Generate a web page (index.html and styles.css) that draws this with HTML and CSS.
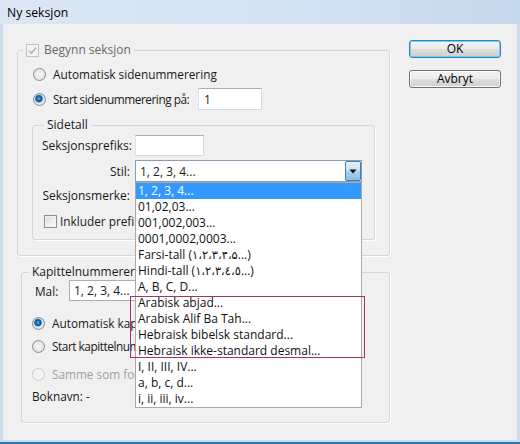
FILE: index.html
```html
<!DOCTYPE html>
<html lang="no">
<head>
<meta charset="utf-8">
<title>Ny seksjon</title>
<link rel="stylesheet" href="styles.css">
</head>
<body>
<div class="window">
  <div class="titlebar">Ny seksjon</div>
  <div class="frame">
    <div class="client">
      <div class="groups">
        <fieldset class="group group-main">
          <legend class="legend legend-main">
            <span class="check check-disabled"><svg viewBox="0 0 11 11" width="11" height="11"><path d="M2 5.6 L4.4 8.2 L9 2.6" fill="none" stroke="#a9a9a9" stroke-width="1.3"/></svg></span>
            <span class="legend-muted">Begynn seksjon</span>
          </legend>
          <div class="group-body body-main">
            <div class="row row-radio">
              <span class="radio"></span>
              <span>Automatisk sidenummerering</span>
            </div>
            <div class="row row-radio row-start">
              <span class="radio on"></span>
              <span class="start-label narrow">Start sidenummerering på:</span>
              <span class="textbox tb-start">1</span>
            </div>
            <fieldset class="group group-sidetall">
              <legend class="legend legend-sidetall">Sidetall</legend>
              <div class="group-body body-sidetall">
                <div class="field field-prefix">
                  <span class="field-label">Seksjonsprefiks:</span>
                  <span class="textbox tb-prefix"></span>
                </div>
                <div class="field field-stil">
                  <span class="field-label">Stil:</span>
                  <div class="combo combo-stil">
                    <span class="combo-value">1, 2, 3, 4...</span>
                    <span class="combo-btn"><svg viewBox="0 0 14 18" width="14" height="18"><path d="M3.5 7.5 H10.5 L7 11.5 Z" fill="#111"/></svg></span>
                    <ul class="dropdown">
                      <li class="item selected">1, 2, 3, 4...</li>
                      <li class="item">01,02,03...</li>
                      <li class="item">001,002,003...</li>
                      <li class="item">0001,0002,0003...</li>
                      <li class="item">Farsi-tall (<span class="num">۱،۲،۳،۴،۵</span>...)</li>
                      <li class="item">Hindi-tall (<span class="num">١،٢،٣،٤،٥</span>...)</li>
                      <li class="item">A, B, C, D...</li>
                      <li class="item">Arabisk abjad...</li>
                      <li class="item">Arabisk Alif Ba Tah...</li>
                      <li class="item">Hebraisk bibelsk standard...</li>
                      <li class="item">Hebraisk ikke-standard desmal...</li>
                      <li class="item">I, II, III, IV...</li>
                      <li class="item">a, b, c, d...</li>
                      <li class="item">i, ii, iii, iv...</li>
                      <li class="annot" aria-hidden="true"></li>
                    </ul>
                  </div>
                </div>
                <div class="field field-merke">
                  <span class="field-label">Seksjonsmerke:</span>
                  <span class="textbox tb-merke"></span>
                </div>
                <div class="row row-check">
                  <span class="check"></span>
                  <span>Inkluder prefiks ved nummerering</span>
                </div>
              </div>
            </fieldset>
          </div>
        </fieldset>

        <fieldset class="group group-kap">
          <legend class="legend legend-kap">Kapittelnummerering</legend>
          <div class="group-body body-kap">
            <div class="row row-mal">
              <span class="mal-label">Mal:</span>
              <span class="combo combo-mal"><span class="combo-value">1, 2, 3, 4...</span></span>
            </div>
            <div class="row row-radio row-auto">
              <span class="radio on"></span>
              <span>Automatisk kapittelnummerering</span>
            </div>
            <div class="row row-radio row-kstart">
              <span class="radio"></span>
              <span class="start-label narrow">Start kapittelnummerering på:</span>
              <span class="textbox tb-start"></span>
            </div>
            <div class="row row-radio row-same disabled">
              <span class="radio radio-disabled"></span>
              <span>Samme som forrige dokument i boken</span>
            </div>
            <div class="row row-book">Boknavn: -</div>
          </div>
        </fieldset>
      </div>

      <div class="buttons">
        <button class="btn btn-default" type="button">OK</button>
        <button class="btn" type="button">Avbryt</button>
      </div>
    </div>
  </div>
</div>
</body>
</html>
```

FILE: styles.css
```css
* {
  box-sizing: border-box;
}

html,
body {
  margin: 0;
  padding: 0;
}

body {
  width: 520px;
  height: 444px;
  overflow: hidden;
  font-family: "Open Sans", "DejaVu Sans", sans-serif;
  font-size: 11.8px;
  color: #1a1a1a;
  background: #cddcee;
}

.window {
  width: 520px;
  height: 444px;
  display: flex;
  flex-direction: column;
}

.titlebar {
  flex: none;
  height: 24px;
  padding: 1px 0 0 7px;
  line-height: 23px;
  font-size: 12.2px;
  color: #000;
  background: linear-gradient(90deg, #dbe7f4 0%, #d3e2f2 60%, #c6d8ec 100%);
}

.frame {
  flex: 1;
  display: flex;
  padding: 0 3px 2px;
  background: #cddcee;
  border-bottom: 2px solid #2b79a9;
}

.client {
  flex: 1;
  display: flex;
  justify-content: space-between;
  align-items: flex-start;
  padding: 16px 16px 0 14px;
  background: #f0f0f0;
}

.groups {
  width: 373px;
  margin-top: 2px;
}

/* group boxes */
.group {
  margin: 0;
  padding: 0;
  min-inline-size: 0;
  border: 1px solid #d3d6d9;
  border-radius: 3px;
  box-shadow: 1px 1px 0 #ffffff;
}

.legend {
  display: flex;
  align-items: center;
  height: 16px;
  line-height: 16px;
  padding: 0 3px;
  font-size: 12px;
}

.legend-main {
  margin-left: 5px;
  padding: 0 4px 0 3px;
  gap: 5px;
}

.legend-muted {
  color: #6a6a6a;
}

.legend-sidetall {
  margin-left: 11px;
}

.legend-kap {
  margin-left: 7px;
}

.group-main {
  width: 373px;
}

.body-main {
  padding: 5px 14px 15px 14px;
}

.group-sidetall {
  width: 343px;
  margin-top: 7px;
}

.body-sidetall {
  padding: 2px 0 7px 9px;
}

.group-kap {
  width: 369px;
  margin: 8px 0 0 4px;
}

.body-kap {
  padding: 0 10px 15px 10px;
}

/* rows */
.row {
  display: flex;
  align-items: center;
  height: 22px;
  white-space: nowrap;
}

.body-main .row-radio {
  padding-left: 1px;
}

.row-start {
  margin-top: 3px;
}

.start-label {
  width: 145px;
  flex: none;
}

.narrow {
  letter-spacing: -0.45px;
}

.row-check {
  margin-top: 4px;
  padding-left: 2px;
}

.row-mal {
  height: 21px;
}

.row-auto {
  margin-top: 11px;
}

.row-kstart {
  margin-top: 1px;
}

.row-same {
  margin-top: 6px;
}

.disabled {
  color: #a0a0a0;
}

/* form rows inside Sidetall */
.field {
  display: flex;
  align-items: center;
  height: 22px;
  white-space: nowrap;
}

.field-prefix {
  height: 21px;
}

.field-stil {
  margin-top: 4px;
}

.field-merke {
  margin-top: 2px;
}

.field-label {
  flex: none;
  width: 88px;
  margin-right: 5px;
  text-align: right;
  font-size: 12px;
}

/* controls */
.radio {
  flex: none;
  width: 13px;
  height: 13px;
  margin-right: 7px;
  border-radius: 50%;
  border: 1px solid #8a8c8e;
  background: radial-gradient(circle at 50% 50%, #f7f7f7 0, #e6e6e6 60%, #cdcdcd 100%);
}

.radio.on {
  background:
    radial-gradient(circle at 45% 42%, #6cb8e6 0, #2b75b0 1.6px, #174c7d 3px, #3f8cc6 3.5px, #bfe0f4 4.2px, rgba(255, 255, 255, 0) 4.8px),
    radial-gradient(circle at 50% 50%, #f7f7f7 0, #e6e6e6 60%, #cdcdcd 100%);
}

.radio-disabled {
  border-color: #c8c8c8;
  background: #f3f3f3;
}

.check {
  flex: none;
  display: flex;
  align-items: center;
  justify-content: center;
  width: 13px;
  height: 13px;
  margin-right: 3px;
  border: 1px solid #8e8f8f;
  box-shadow: inset 0 0 0 1px #f3f3f3;
  background: linear-gradient(135deg, #d8d8d8 0%, #f4f4f4 70%, #fbfbfb 100%);
}

.check-disabled {
  margin-right: 0;
  border-color: #c3c3c3;
  background: #f4f4f4;
}

.textbox {
  flex: none;
  display: flex;
  align-items: center;
  height: 22px;
  padding-left: 5px;
  background: #fff;
  border: 1px solid #d8dbe0;
  border-top-color: #abadb3;
  border-left-color: #e2e3ea;
  font-size: 12px;
}

.tb-start {
  width: 64px;
}

.tb-prefix {
  width: 69px;
  height: 21px;
}

.tb-merke {
  width: 69px;
}

.combo {
  flex: none;
  display: flex;
  align-items: center;
  background: #fff;
  border: 1px solid #8b9db3;
  font-size: 12px;
}

.combo-stil {
  position: relative;
  width: 227px;
  height: 22px;
}

.combo-value {
  flex: 1;
  padding-left: 4px;
  white-space: nowrap;
}

.combo-btn {
  flex: none;
  width: 16px;
  height: 20px;
  display: flex;
  align-items: center;
  justify-content: center;
  border: 1px solid #3c7fb1;
  border-radius: 2px;
  background: linear-gradient(#e6f3fb 0%, #c9e3f4 45%, #a9d2ee 50%, #8dbfe3 100%);
}

.mal-label {
  width: 34px;
  margin-left: 3px;
  flex: none;
}

.combo-mal {
  width: 227px;
  height: 21px;
  border-color: #abadb3;
}

/* dropdown list (opened) */
.dropdown {
  position: absolute;
  z-index: 10;
  left: -1px;
  top: 100%;
  width: 227px;
  margin: 1px 0 0;
  padding: 0;
  list-style: none;
  background: #fff;
  border: 1px solid #a9a9a9;
  font-size: 12px;
  color: #111;
}

.item {
  height: 16px;
  line-height: 16px;
  padding-left: 2px;
  white-space: nowrap;
}

.item.selected {
  background: #3399ff;
  color: #fff;
}

.num {
  font-family: "DejaVu Sans", sans-serif;
  font-size: 11.5px;
  unicode-bidi: isolate;
  direction: ltr;
}

.annot {
  position: absolute;
  left: -6px;
  top: 113px;
  width: 235px;
  height: 62px;
  border: 1px solid #a23372;
  pointer-events: none;
}

/* buttons */
.buttons {
  flex: none;
  width: 92px;
  display: flex;
  flex-direction: column;
  gap: 12px;
}

.btn {
  width: 92px;
  height: 18px;
  padding: 0;
  font-family: inherit;
  font-size: 12px;
  line-height: 14px;
  color: #000;
  border: 1px solid #707070;
  border-radius: 3px;
  background: linear-gradient(#f2f2f2 0%, #ebebeb 50%, #dddddd 51%, #cfcfcf 100%);
  box-shadow: inset 0 0 0 1px #fbfbfb;
}

.btn-default {
  border-color: #3c7fb1;
  box-shadow: inset 0 0 0 1px #6fd0f5;
}
```
